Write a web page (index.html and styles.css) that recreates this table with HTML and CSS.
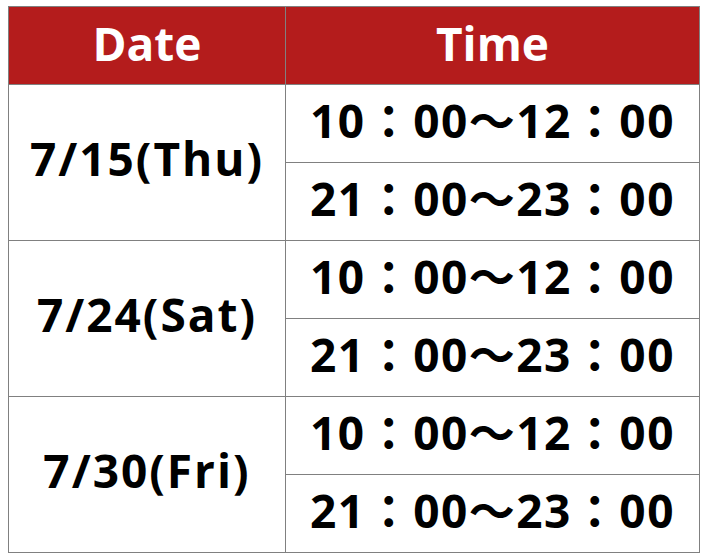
FILE: index.html
```html
<!DOCTYPE html>
<html lang="ja">
<head>
<meta charset="utf-8">
<link rel="stylesheet" href="styles.css">
</head>
<body>
<table class="schedule">
  <thead>
    <tr><th class="col-date">Date</th><th class="col-time">Time</th></tr>
  </thead>
  <tbody>
    <tr><td class="date" rowspan="2">7/15(Thu)</td><td class="time">10：00〜12：00</td></tr>
    <tr><td class="time">21：00〜23：00</td></tr>
    <tr><td class="date" rowspan="2">7/24(Sat)</td><td class="time">10：00〜12：00</td></tr>
    <tr><td class="time">21：00〜23：00</td></tr>
    <tr><td class="date" rowspan="2">7/30(Fri)</td><td class="time">10：00〜12：00</td></tr>
    <tr><td class="time">21：00〜23：00</td></tr>
  </tbody>
</table>
</body>
</html>
```

FILE: styles.css
```css
html, body {
  margin: 0;
  padding: 0;
  background: #ffffff;
}
body {
  padding: 6px 8px 0 8px;
  font-family: "Open Sans", "Noto Sans CJK JP", sans-serif;
}
.schedule {
  border-collapse: collapse;
  width: 692px;
  table-layout: fixed;
}
.schedule th, .schedule td {
  border: 1px solid #808080;
  padding: 0 0 8px 0;
  height: 69px;
  text-align: center;
  vertical-align: middle;
  font-weight: 700;
  font-size: 46px;
  line-height: 1;
}
.col-date { width: 276px; }
.schedule th {
  background: #b41c1c;
  color: #ffffff;
  padding-bottom: 6px;
  height: 71px;
}
.schedule td {
  color: #000000;
}
.schedule .date {
  letter-spacing: 2px;
  padding-bottom: 9px;
}
.schedule .time {
  letter-spacing: 1.5px;
}
```
